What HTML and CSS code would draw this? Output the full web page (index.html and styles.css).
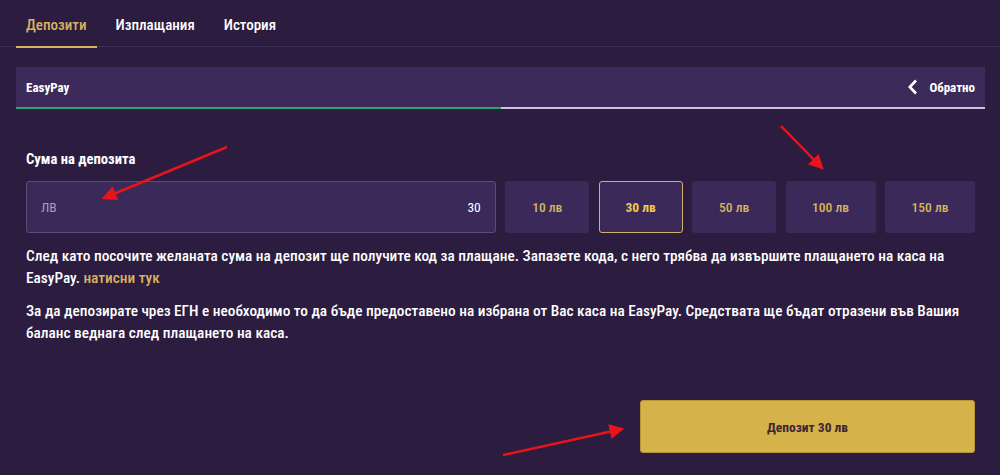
FILE: index.html
```html
<!DOCTYPE html>
<html lang="bg">
<head>
<meta charset="utf-8">
<title>Депозити</title>
<link rel="stylesheet" href="styles.css">
</head>
<body>
<div class="page">
  <nav class="tabs">
    <a class="tab active">Депозити</a>
    <a class="tab">Изплащания</a>
    <a class="tab">История</a>
  </nav>
  <div class="method">
    <div class="method-bar">
      <span class="method-name">EasyPay</span>
      <span class="back">
        <svg width="11" height="16" viewBox="0 0 11 16"><path d="M9 1.5 L2.8 8 L9 14.5" fill="none" stroke="#fff" stroke-width="2.6"/></svg>
        Обратно
      </span>
    </div>
    <div class="progress"><div class="progress-fill"></div></div>
  </div>
  <section class="form">
    <div class="label">Сума на депозита</div>
    <div class="amount-row">
      <div class="amount-input"><span class="cur">ЛВ</span><span class="val">30</span></div>
      <button class="chip chip-a">10 лв</button>
      <button class="chip chip-a selected">30 лв</button>
      <button class="chip chip-a">50 лв</button>
      <button class="chip chip-b">100 лв</button>
      <button class="chip chip-b">150 лв</button>
    </div>
    <p class="info">След като посочите желаната сума на депозит ще получите код за плащане. Запазете кода, с него трябва да извършите плащането на каса на EasyPay. <a class="link">натисни тук</a></p>
    <p class="info">За да депозирате чрез ЕГН е необходимо то да бъде предоставено на избрана от Вас каса на EasyPay. Средствата ще бъдат отразени във Вашия баланс веднага след плащането на каса.</p>
    <div class="actions"><button class="submit">Депозит 30 лв</button></div>
  </section>
  <svg class="arrows" width="1000" height="475" viewBox="0 0 1000 475">
    <defs>
      <marker id="head" markerWidth="6" markerHeight="6" refX="5" refY="3" orient="auto" markerUnits="strokeWidth">
        <path d="M0 0 L6 3 L0 6 Z" fill="#e8141c"/>
      </marker>
    </defs>
    <line x1="227" y1="147" x2="104" y2="198" stroke="#e8141c" stroke-width="2.5" marker-end="url(#head)"/>
    <line x1="781" y1="126" x2="822" y2="168" stroke="#e8141c" stroke-width="2.5" marker-end="url(#head)"/>
    <line x1="503" y1="455" x2="622" y2="429" stroke="#e8141c" stroke-width="2.5" marker-end="url(#head)"/>
  </svg>
</div>
</body>
</html>
```
FILE: styles.css
```css
html, body {
  margin: 0;
  padding: 0;
  background: #2c1d40;
}
body {
  font-family: Roboto, "Liberation Sans", sans-serif;
  font-stretch: condensed;
  color: #fff;
  width: 1000px;
  height: 475px;
  overflow: hidden;
}
.page {
  position: relative;
  height: 475px;
}
.tabs {
  display: flex;
  padding: 0 0 0 16px;
  border-bottom: 1px solid #3e2f56;
  height: 47px;
  box-sizing: border-box;
}
.tab {
  font-size: 15px;
  font-weight: 500;
  color: #fff;
  padding: 16px 10px 0;
  margin-right: 9px;
  height: 46px;
  box-sizing: border-box;
}
.tab.active {
  color: #d9b25f;
  border-bottom: 2px solid #d9b25f;
  height: 48px;
  margin-bottom: -1px;
}
.method {
  margin: 20px 15px 0 16px;
}
.method-bar {
  height: 40px;
  background: #3c2a5a;
  display: flex;
  align-items: center;
  justify-content: space-between;
  padding: 0 10px;
}
.method-name {
  font-size: 13px;
  font-weight: 700;
}
.back {
  display: flex;
  align-items: center;
  gap: 11px;
  font-size: 13px;
  font-weight: 700;
}
.progress {
  height: 2px;
  background: #cdbfe0;
}
.progress-fill {
  width: 50%;
  height: 2px;
  background: #2fa36b;
}
.form {
  padding: 41px 25px 0 26px;
}
.label {
  font-size: 14.6px;
  font-weight: 700;
  height: 22px;
}
.amount-row {
  display: flex;
  gap: 9.5px;
  margin-top: 9px;
  height: 52px;
}
.amount-input {
  width: 470px;
  box-sizing: border-box;
  border: 1px solid #5c4b78;
  border-radius: 3px;
  background: #3b2a59;
  display: flex;
  align-items: center;
  justify-content: space-between;
  padding: 0 14px;
  font-size: 13.5px;
}
.cur { color: #a99cbc; }
.val { color: #fff; font-weight: 400; }
.chip {
  border: 1px solid transparent;
  border-radius: 3px;
  background: #3b2a59;
  color: #d7b55f;
  font-family: inherit;
  font-stretch: condensed;
  font-size: 13.5px;
  font-weight: 500;
  padding: 0;
  cursor: pointer;
}
.chip-a { width: 84px; }
.chip-b { width: 90px; }
.chip.selected {
  border-color: #d3b06a;
  color: #f0c84e;
  font-weight: 700;
}
.info {
  margin: 12px 0 0;
  font-size: 15.3px;
  font-weight: 500;
  line-height: 22px;
  color: #fff;
}
.info + .info { margin-top: 11px; }
.link { color: #d9b25f; }
.actions {
  display: flex;
  justify-content: flex-end;
  margin-top: 56px;
}
.submit {
  width: 335px;
  height: 53px;
  background: #d6b24a;
  border: 1px solid #b89636;
  border-radius: 3px;
  color: #3b2631;
  font-family: inherit;
  font-stretch: condensed;
  font-size: 13.5px;
  font-weight: 700;
}
.arrows {
  position: absolute;
  left: 0;
  top: 0;
  pointer-events: none;
}
```
